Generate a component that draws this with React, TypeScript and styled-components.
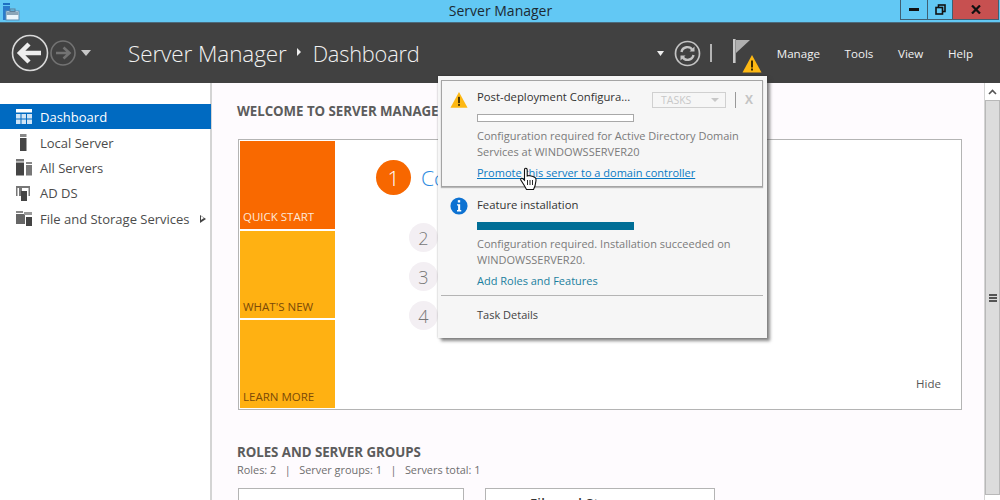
import React from 'react';
import styled, { createGlobalStyle } from 'styled-components';

const Global = createGlobalStyle`
  html, body { margin: 0; padding: 0; width: 1000px; height: 500px; overflow: hidden; background: #fff; }
  * { box-sizing: border-box; }
  body { font-family: "Open Sans", "Noto Sans", sans-serif; }
`;

const Screen = styled.div`
  position: relative; width: 1000px; height: 500px; overflow: hidden;
  display: flex; flex-direction: column;
`;
const TitleBar = styled.div`
  height: 23px; flex: none; background: #62c8f4; border-bottom: 1px solid #4b6a7c;
  display: flex; align-items: flex-start; justify-content: space-between; position: relative;
`;
const TitleText = styled.div`
  position: absolute; left: 1px; right: 0; top: 0; text-align: center;
  font-size: 14px; line-height: 21px; color: #1c2a33;
`;
const AppIcon = styled.svg` width: 18px; height: 18px; margin: 3px 0 0 2px; `;
const WinButtons = styled.div`
  display: flex; height: 20px; border: 1px solid #3f5f72; border-top: none; margin-right: 1px; z-index: 1;
`;
const WinButton = styled.div<{ $w: number; $close?: boolean }>`
  width: ${p => p.$w}px; display: flex; align-items: center; justify-content: center;
  background: ${p => p.$close ? '#c75050' : 'transparent'};
  border-right: ${p => p.$close ? 'none' : '1px solid #3f5f72'};
`;
const Header = styled.div`
  height: 60px; flex: none; background: #414141; display: flex; align-items: center; padding-left: 11px; color: #f2f2f2;
`;
const NavIcon = styled.svg<{ $ml?: number }>` flex: none; margin-left: ${p => p.$ml ?? 0}px; `;
const Crumb = styled.div`
  display: flex; align-items: center; margin-left: 37px; font-size: 22.5px; font-weight: 300; color: #f1f1f1; letter-spacing: -0.1px;
`;
const CrumbSep = styled.span`
  width: 0; height: 0; border-left: 4px solid #eee; border-top: 4px solid transparent; border-bottom: 4px solid transparent; margin: -2px 12px 0 10px;
`;
const CrumbLeaf = styled.span` font-size: 21.8px; letter-spacing: -0.2px; `;
const HeaderRight = styled.div` margin-left: auto; display: flex; align-items: center; height: 100%; `;
const Divider = styled.div` width: 2px; height: 18px; background: #b4b4b4; margin: 0 21px 0 9px; `;
const FlagWrap = styled.div` width: 30px; height: 42px; margin-right: 14px; margin-top: 6px; `;
const FlagArt = styled.svg` display: block; `;
const Menu = styled.div`
  display: flex; gap: 24.6px; font-size: 11.6px; color: #f1f1f1; margin-right: 27px; margin-top: 1px;
`;
const Body = styled.div` flex: 1; display: flex; min-height: 0; `;
const Sidebar = styled.nav`
  width: 212px; flex: none; background: #fff; border-right: 2px solid #d4d4d4; padding-top: 20.5px;
`;
const NavRow = styled.div<{ $active?: boolean }>`
  height: 25.4px; display: flex; align-items: center; padding: 2px 0 0 16px; gap: 8px;
  font-size: 13px; color: ${p => p.$active ? '#fff' : '#4c4c4c'};
  background: ${p => p.$active ? '#006ac1' : 'transparent'}; width: 211px;
`;
const NavGlyph = styled.svg` width: 16px; height: 17px; flex: none; `;
const Arrow = styled.span`
  margin-left: auto; margin-right: 5px; width: 0; height: 0; border-left: 6px solid #444;
  border-top: 4.5px solid transparent; border-bottom: 4.5px solid transparent; position: relative;
  &::after { content: ''; position: absolute; left: -5px; top: -2.5px; border-left: 3.5px solid #fff; border-top: 2.5px solid transparent; border-bottom: 2.5px solid transparent; }
`;
const Main = styled.main`
  flex: 1; background: #fefbfe; padding: 18px 22px 0 26px; min-width: 0; overflow: hidden;
`;
const SectionHead = styled.h2`
  margin: 0 0 0 -1px; font-size: 13.3px; font-weight: 700; color: #5c5c5c; line-height: 20px; letter-spacing: -0.05px;
`;
const WelcomeBox = styled.section`
  margin-top: 18px; height: 271px; background: #fff; border: 1px solid #b4b4b4; padding: 1px;
  display: flex; position: relative;
`;
const Tiles = styled.div` width: 95px; display: flex; flex-direction: column; gap: 2px; flex: none; `;
const Tile = styled.div<{ $bg: string; $fg: string }>`
  flex: 1; background: ${p => p.$bg}; color: ${p => p.$fg}; font-size: 11.5px;
  display: flex; align-items: flex-end; padding: 0 0 3.5px 3px; line-height: 16px;
`;
const Steps = styled.div` flex: 1; display: flex; flex-direction: column; align-items: flex-start; padding: 19px 0 0 41px; `;
const StepOne = styled.div`
  width: 35px; height: 35px; border-radius: 50%; background: #f76700; color: #fff;
  font-size: 21px; font-weight: 300; display: flex; align-items: center; justify-content: center;
`;
const StepOneRow = styled.div` display: flex; align-items: center; gap: 10px; margin-bottom: 28px; `;
const StepLink = styled.span` font-size: 21px; font-weight: 300; color: #2d8ae0; white-space: nowrap; `;
const StepCircle = styled.div`
  width: 29px; height: 29px; border-radius: 50%; background: #f3eff3; color: #777;
  font-size: 18px; font-weight: 300; display: flex; align-items: center; justify-content: center;
  margin: 0 0 10px 33px;
`;
const Hide = styled.span`
  position: absolute; right: 20px; bottom: 18px; font-size: 11.5px; color: #555;
`;
const RolesHead = styled(SectionHead)` margin-top: 32px; `;
const RolesSub = styled.div`
  font-size: 10.9px; color: #6e6e6e; line-height: 16px; margin-left: -1px; white-space: pre;
`;
const Cards = styled.div` display: flex; gap: 21px; margin-top: 10px; `;
const Card = styled.div<{ $w: number }>`
  width: ${p => p.$w}px; height: 60px; background: #fff; border: 1px solid #b4b4b4; padding: 6px 0 0 44px;
  font-size: 13px; font-weight: 600; color: #333; line-height: 16px; flex: none; letter-spacing: .4px;
`;
const Scrollbar = styled.div`
  width: 16px; flex: none; background: #fff; border-left: 1px solid #d4d4d4; display: flex; flex-direction: column;
`;
const ScrollUp = styled.div` height: 17px; display: flex; align-items: center; justify-content: center; `;
const Thumb = styled.div`
  flex: 1; margin-bottom: 5px; background: #dcdcdc; border: 1px solid #b8b8b8;
  display: flex; align-items: center; justify-content: center;
`;
const Grip = styled.div` width: 8px; height: 8px; border-top: 2px solid #555; border-bottom: 2px solid #555; position: relative;
  &::after { content: ''; position: absolute; left: 0; right: 0; top: 1px; height: 2px; background: #555; }
`;
const Popup = styled.div`
  position: absolute; left: 438px; top: 76px; width: 329px; height: 262px; background: #f6f6f6;
  box-shadow: 3px 3px 3px rgba(60,60,60,.6), 0 0 2px rgba(0,0,0,.3); padding: 4px 4px 0 3px;
  display: flex; flex-direction: column;
`;
const Notice = styled.div<{ $boxed?: boolean }>`
  border: 1px solid ${p => p.$boxed ? '#a4a4a4' : 'transparent'}; height: ${p => p.$boxed ? '107px' : 'auto'};
  margin-top: ${p => p.$boxed ? 0 : 1}px;
  padding: 8px 0 0 8px; display: flex; gap: 9px;
  box-shadow: ${p => p.$boxed ? '0 1px 1px rgba(0,0,0,.25)' : 'none'};
`;
const NoticeIcon = styled.svg<{ $mt?: number }>` width: 18px; height: 18px; flex: none; margin-top: ${p => p.$mt ?? 0}px; `;
const NoticeBody = styled.div` flex: 1; min-width: 0; position: relative; `;
const NoticeTitle = styled.div` font-size: 11.3px; line-height: 16px; color: #333; `;
const Progress = styled.div<{ $done?: boolean }>`
  width: 157px; height: 8px; margin-top: 9px;
  background: ${p => p.$done ? '#006e96' : '#fff'}; border: 1px solid ${p => p.$done ? '#006e96' : '#a8a8a8'};
`;
const NoticeText = styled.div` font-size: 11px; line-height: 15.5px; color: #7b7b7b; margin-top: 6px; white-space: nowrap; `;
const NoticeLink = styled.a<{ $u?: boolean; $c: string }>`
  display: block; font-size: 11px; line-height: 16px; color: ${p => p.$c}; margin-top: 6px;
  text-decoration: ${p => p.$u ? 'underline' : 'none'}; white-space: nowrap;
`;
const TaskControls = styled.div`
  position: absolute; right: 9px; top: 2px; display: flex; align-items: center;
`;
const TasksButton = styled.div`
  width: 74px; height: 16px; border: 1px solid #d0d0d0; font-size: 10.5px; color: #c8c8c8;
  display: flex; align-items: center; justify-content: space-between; padding: 0 6px 0 8px;
`;
const Caret = styled.span` width: 0; height: 0; border-top: 4px solid #c8c8c8; border-left: 4px solid transparent; border-right: 4px solid transparent; `;
const TaskSep = styled.div` width: 1px; height: 16px; background: #999; margin: 0 9px; `;
const TaskX = styled.span` font-size: 12px; font-weight: 700; color: #c4c4c4; `;
const PopupRule = styled.div` height: 1px; background: #b4b4b4; margin-top: 5px; `;
const TaskDetails = styled.div` font-size: 11px; line-height: 16px; color: #444; padding: 11px 0 0 36px; `;
const Cursor = styled.svg` position: absolute; left: 519px; top: 167px; width: 20px; height: 24px; `;

const Warn = () => (
  <>
    <path d="M10 1 L19.5 18.5 H0.5 Z" fill="#fdb813" />
    <rect x="9" y="6.5" width="2" height="7" fill="#3a2a00" />
    <rect x="9" y="14.5" width="2" height="2" fill="#3a2a00" />
  </>
);

export default function App() {
  return (
    <Screen>
      <Global />
      <TitleBar>
        <AppIcon viewBox="0 0 18 18">
          <rect x="1" y="0" width="7" height="2" fill="#1d6fc2" />
          <rect x="1" y="3" width="7" height="14" fill="#2a7bcb" />
          <rect x="4" y="8" width="13" height="9" fill="#eaf5fb" stroke="#5d8fb5" />
          <rect x="4.5" y="9" width="12" height="3" fill="#8aa5b8" />
          <rect x="8" y="6" width="5" height="2.5" fill="none" stroke="#5d7f98" />
        </AppIcon>
        <TitleText>Server Manager</TitleText>
        <WinButtons>
          <WinButton $w={27}>
            <svg width="10" height="3"><rect width="10" height="3" fill="#111" /></svg>
          </WinButton>
          <WinButton $w={25}>
            <svg width="11" height="11" viewBox="0 0 11 11" fill="none" stroke="#111" strokeWidth="1.6">
              <rect x="3.5" y="1" width="6.5" height="6.5" />
              <rect x="1" y="3.5" width="6.5" height="6.5" fill="#62c8f4" />
            </svg>
          </WinButton>
          <WinButton $w={45} $close>
            <svg width="10" height="9" viewBox="0 0 10 9" stroke="#111" strokeWidth="2.2">
              <path d="M1 0.5 L9 8.5 M9 0.5 L1 8.5" />
            </svg>
          </WinButton>
        </WinButtons>
      </TitleBar>
      <Header>
        <NavIcon width="38" height="38" viewBox="0 0 38 38" fill="none">
          <circle cx="19" cy="19" r="17.5" stroke="#d8d8d8" strokeWidth="1.6" />
          <path d="M30 19 H10 M18 10 L9 19 L18 28" stroke="#ededed" strokeWidth="4.5" />
        </NavIcon>
        <NavIcon $ml={1} width="26" height="26" viewBox="0 0 26 26" fill="none">
          <circle cx="13" cy="13" r="12" stroke="#737373" strokeWidth="1.6" />
          <path d="M6 13 H19 M13.5 7.5 L19.5 13 L13.5 18.5" stroke="#737373" strokeWidth="2.6" />
        </NavIcon>
        <NavIcon $ml={5} width="10" height="6" viewBox="0 0 10 6">
          <path d="M0 0 H10 L5 6 Z" fill="#c8c8c8" />
        </NavIcon>
        <Crumb>Server Manager<CrumbSep /><CrumbLeaf>Dashboard</CrumbLeaf></Crumb>
        <HeaderRight>
          <NavIcon width="7" height="5" viewBox="0 0 7 5"><path d="M0 0 H7 L3.5 5 Z" fill="#eee" /></NavIcon>
          <NavIcon $ml={10} width="27" height="27" viewBox="0 0 27 27" fill="none" stroke="#c4c4c4">
            <circle cx="13.5" cy="13.5" r="12" strokeWidth="1.7" />
            <path d="M7.5 12 A6 6 0 0 1 18.5 10 M19.5 15 A6 6 0 0 1 8.5 17" strokeWidth="2.4" />
            <path d="M20.5 6.5 V11.5 H15.5 Z M6.5 20.5 V15.5 H11.5 Z" fill="#c4c4c4" stroke="none" />
          </NavIcon>
          <Divider />
          <FlagWrap>
            <FlagArt width="30" height="42" viewBox="0 0 30 42">
              <rect x="0" y="4" width="2.6" height="24" fill="#c8c8c8" />
              <path d="M3 5 H17 L3 18 Z" fill="#b0b0b0" />
              <g transform="translate(9 19)"><Warn /></g>
            </FlagArt>
          </FlagWrap>
          <Menu><span>Manage</span><span>Tools</span><span>View</span><span>Help</span></Menu>
        </HeaderRight>
      </Header>
      <Body>
        <Sidebar>
          <NavRow $active>
            <NavGlyph viewBox="0 0 16 17" fill="#cfe4f6">
              <rect y="0" width="16" height="3.5" fill="#fff" />
              <rect y="5" width="4.5" height="4.5" /><rect x="5.5" y="5" width="4.5" height="4.5" /><rect x="11" y="5" width="5" height="4.5" />
              <rect y="10.5" width="4.5" height="4.5" /><rect x="5.5" y="10.5" width="4.5" height="4.5" /><rect x="11" y="10.5" width="5" height="4.5" />
            </NavGlyph>
            Dashboard
          </NavRow>
          <NavRow>
            <NavGlyph viewBox="0 0 16 17"><rect x="4" y="0" width="6.5" height="3" fill="#888" /><rect x="4" y="4" width="6.5" height="13" fill="#444" /></NavGlyph>
            Local Server
          </NavRow>
          <NavRow>
            <NavGlyph viewBox="0 0 16 17"><rect y="0" width="8" height="2.5" fill="#777" /><rect y="3.5" width="8" height="13" fill="#444" /><rect x="10" y="3" width="6" height="2" fill="#888" /><rect x="10" y="6" width="6" height="10.5" fill="#777" /></NavGlyph>
            All Servers
          </NavRow>
          <NavRow>
            <NavGlyph viewBox="0 0 16 17"><path d="M0 1 H14 V3 H0 Z M0 3 H1.5 V11 H0 Z M12.5 3 H14 V11 H12.5 Z" fill="#777" /><rect x="3" y="3" width="3" height="8" fill="#777" /><rect x="5" y="6" width="6" height="10" fill="#444" /></NavGlyph>
            AD DS
          </NavRow>
          <NavRow>
            <NavGlyph viewBox="0 0 16 17"><rect y="1" width="7" height="2" fill="#888" /><rect y="4" width="9" height="10" fill="#666" /><rect x="8" y="2" width="8" height="3" fill="#999" /><rect x="10" y="7" width="6" height="9" fill="#444" /></NavGlyph>
            File and Storage Services
            <Arrow />
          </NavRow>
        </Sidebar>
        <Main>
          <SectionHead>WELCOME TO SERVER MANAGER</SectionHead>
          <WelcomeBox>
            <Tiles>
              <Tile $bg="#f96900" $fg="#fde8d8">QUICK START</Tile>
              <Tile $bg="#ffb112" $fg="#7b4a08">WHAT'S NEW</Tile>
              <Tile $bg="#ffb112" $fg="#7b4a08">LEARN MORE</Tile>
            </Tiles>
            <Steps>
              <StepOneRow><StepOne>1</StepOne><StepLink>Configure this local server</StepLink></StepOneRow>
              <StepCircle>2</StepCircle>
              <StepCircle>3</StepCircle>
              <StepCircle>4</StepCircle>
            </Steps>
            <Hide>Hide</Hide>
          </WelcomeBox>
          <RolesHead>ROLES AND SERVER GROUPS</RolesHead>
          <RolesSub>Roles: 2   |   Server groups: 1   |   Servers total: 1</RolesSub>
          <Cards>
            <Card $w={226} />
            <Card $w={230}>File and St</Card>
          </Cards>
        </Main>
        <Scrollbar>
          <ScrollUp>
            <svg width="9" height="6" viewBox="0 0 9 6" fill="none" stroke="#555" strokeWidth="1.6"><path d="M1 5 L4.5 1.5 L8 5" /></svg>
          </ScrollUp>
          <Thumb><Grip /></Thumb>
        </Scrollbar>
      </Body>
      <Popup>
        <Notice $boxed>
          <NoticeIcon $mt={2} viewBox="0 0 20 20"><Warn /></NoticeIcon>
          <NoticeBody>
            <NoticeTitle>Post-deployment Configura...</NoticeTitle>
            <TaskControls>
              <TasksButton>TASKS<Caret /></TasksButton>
              <TaskSep />
              <TaskX>X</TaskX>
            </TaskControls>
            <Progress />
            <NoticeText>Configuration required for Active Directory Domain<br />Services at WINDOWSSERVER20</NoticeText>
            <NoticeLink $u $c="#0a7ac4">Promote this server to a domain controller</NoticeLink>
          </NoticeBody>
        </Notice>
        <Notice>
          <NoticeIcon viewBox="0 0 20 20">
            <circle cx="10" cy="10" r="9.5" fill="#0d72d2" />
            <rect x="8.7" y="3.5" width="2.6" height="2.6" fill="#fff" />
            <path d="M7.8 8 H11.3 V14.5 H12.5 V16 H7.8 V14.5 H9 V9.5 H7.8 Z" fill="#fff" />
          </NoticeIcon>
          <NoticeBody>
            <NoticeTitle>Feature installation</NoticeTitle>
            <Progress $done />
            <NoticeText>Configuration required. Installation succeeded on<br />WINDOWSSERVER20.</NoticeText>
            <NoticeLink $c="#1a7f9e">Add Roles and Features</NoticeLink>
          </NoticeBody>
        </Notice>
        <PopupRule />
        <TaskDetails>Task Details</TaskDetails>
      </Popup>
      <Cursor viewBox="0 0 20 24">
        <path d="M6 1.5 C7.2 1 8.2 1.6 8.2 3 V9 L10 8.5 L12 9 L14 9.5 L16 10.5 C17 11 17.2 12 17 13.5 L16 19 L14.5 22.5 H7.5 L5 18 L1.8 13 C1.2 11.8 2.6 10.6 4 11.8 L5.5 13.2 V3 C5.5 2.4 5.6 1.8 6 1.5 Z" fill="#fff" stroke="#111" strokeWidth="1.1" />
        <path d="M8.5 13 V18 M11 13 V18 M13.5 13 V18" stroke="#111" strokeWidth="0.9" />
      </Cursor>
    </Screen>
  );
}
